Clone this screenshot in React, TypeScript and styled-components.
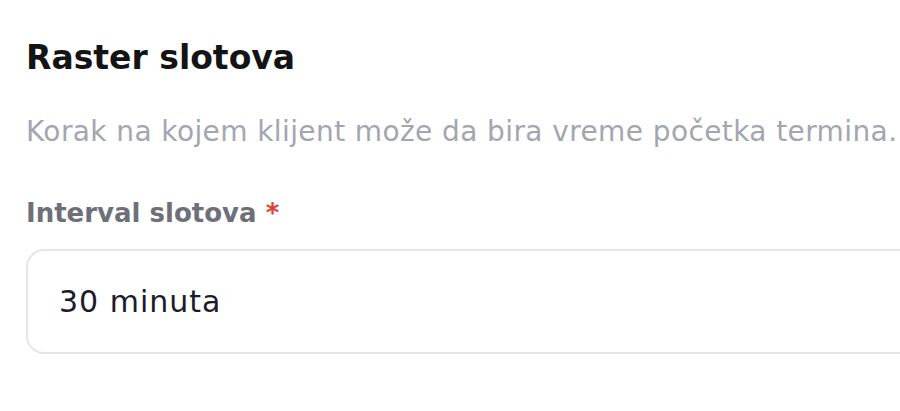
import React from 'react';
import styled, { createGlobalStyle } from 'styled-components';

const GlobalStyle = createGlobalStyle`
    html, body {
        margin: 0;
        padding: 0;
        background: #ffffff;
        overflow: hidden;
    }
    body {
        font-family: 'DejaVu Sans', Inter, sans-serif;
        -webkit-font-smoothing: antialiased;
    }
`;

const Section = styled.section`
    width: 1000px;
    padding: 36px 0 0 26px;
    box-sizing: border-box;
`;

const Title = styled.h2`
    margin: 0;
    font-size: 33px;
    line-height: 44px;
    font-weight: 700;
    color: #141414;
`;

const Hint = styled.p`
    margin: 34px 0 0;
    font-size: 28px;
    line-height: 36px;
    letter-spacing: 0.4px;
    white-space: nowrap;
    color: #a3a6b0;
`;

const Field = styled.div`
    margin-top: 47px;
    display: flex;
    flex-direction: column;
    gap: 20px;
`;

const Label = styled.label`
    font-size: 26px;
    line-height: 32px;
    font-weight: 700;
    color: #6e6f78;
`;

const Required = styled.span`
    color: #e0413a;
`;

const Select = styled.div`
    height: 105px;
    box-sizing: border-box;
    border: 2px solid #e6e6e6;
    border-radius: 18px;
    display: flex;
    align-items: center;
    padding: 0 31px;
    font-size: 30px;
    letter-spacing: 1px;
    color: #1c1b2b;
`;

const App = () => {
    return (
        <>
            <GlobalStyle />
            <Section>
                <Title>Raster slotova</Title>
                <Hint>Korak na kojem klijent može da bira vreme početka termina.</Hint>
                <Field>
                    <Label>
                        Interval slotova <Required>*</Required>
                    </Label>
                    <Select>30 minuta</Select>
                </Field>
            </Section>
        </>
    );
};

export default App;
